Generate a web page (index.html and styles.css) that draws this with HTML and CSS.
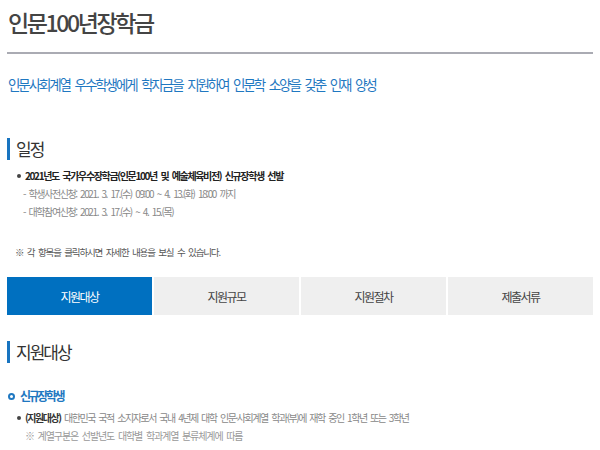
FILE: index.html
```html
<!DOCTYPE html>
<html lang="ko">
<head>
    <meta charset="UTF-8">
    <meta name="viewport" content="width=device-width, initial-scale=1.0">
    <title>인문100년장학금</title>
    <link rel="stylesheet" href="styles.css">
</head>
<body>
    <div class="page">
        <h1 class="page-title">인문100년장학금</h1>
        <p class="lead">인문사회계열 우수학생에게 학자금을 지원하여 인문학 소양을 갖춘 인재 양성</p>

        <h2 class="sec-title">일정</h2>
        <ul class="sched">
            <li class="sched-main">2021년도 국가우수장학금(인문100년 및 예술체육비전) 신규장학생 선발</li>
            <li class="sched-sub">- 학생사전신청: 2021. 3. 17.(수) 09:00 ~ 4. 13.(화) 18:00 까지</li>
            <li class="sched-sub">- 대학참여신청: 2021. 3. 17.(수) ~ 4. 15.(목)</li>
        </ul>

        <p class="notice">※ 각 항목을 클릭하시면 자세한 내용을 보실 수 있습니다.</p>

        <div class="tabs">
            <a class="tab active">지원대상</a>
            <a class="tab">지원규모</a>
            <a class="tab">지원절차</a>
            <a class="tab">제출서류</a>
        </div>

        <h2 class="sec-title">지원대상</h2>
        <h3 class="sub-title">신규장학생</h3>
        <ul class="detail">
            <li class="detail-main"><b>(지원대상)</b> 대한민국 국적 소지자로서 국내 4년제 대학 인문·사회계열 학과(부)에 재학 중인 1학년 또는 3학년</li>
            <li class="detail-note">※ 계열구분은 선발년도 대학별 학과계열 분류체계에 따름</li>
        </ul>
    </div>
</body>
</html>
```

FILE: styles.css
```css
body {
    margin: 0;
    background: #fff;
    font-family: "Noto Sans CJK KR", "Noto Sans", sans-serif;
    color: #333;
}

.page {
    padding: 0 7px;
}

ul {
    list-style: none;
    margin: 0;
    padding: 0;
}

.page-title {
    margin: 0;
    padding: 5px 0 13px 1px;
    font-size: 23px;
    font-weight: 500;
    letter-spacing: -2.4px;
    line-height: 34px;
    color: #444;
    border-bottom: 2px solid #aaabb3;
}

.lead {
    margin: 20px 0 0 1px;
    font-size: 13.5px;
    letter-spacing: -2.1px;
    word-spacing: 3px;
    line-height: 20px;
    color: #1f78c1;
}

.sec-title {
    margin: 0;
    padding-left: 6px;
    border-left: 3px solid #1874c0;
    font-size: 17px;
    font-weight: 400;
    letter-spacing: -2px;
    line-height: 22px;
    color: #333;
}

.page > .sec-title:first-of-type {
    margin-top: 44px;
}

.sched {
    margin-top: 7px;
    padding-left: 10px;
}

.sched-main {
    font-size: 10px;
    font-weight: 700;
    letter-spacing: -1.35px;
    word-spacing: 2px;
    line-height: 18px;
    color: #222;
}

.sched-main::before,
.detail-main::before {
    content: "";
    display: inline-block;
    width: 4px;
    height: 4px;
    border-radius: 50%;
    background: #444;
    margin: 0 4px 2px 0;
    vertical-align: middle;
}

.sched-sub {
    padding-left: 6px;
    font-size: 10px;
    letter-spacing: -1.4px;
    word-spacing: 2px;
    line-height: 18px;
    color: #888;
}

.notice {
    margin: 22px 0 0 8px;
    font-size: 9.5px;
    letter-spacing: -1.15px;
    word-spacing: 2px;
    line-height: 18px;
    color: #555;
}

.tabs {
    display: flex;
    gap: 2px;
    margin-top: 16px;
}

.tab {
    flex: 1;
    height: 38px;
    display: flex;
    align-items: center;
    justify-content: center;
    background: #efefef;
    font-size: 12px;
    letter-spacing: -1.5px;
    color: #444;
    cursor: pointer;
}

.tab.active {
    background: #0070c0;
    color: #fff;
}

.tabs + .sec-title {
    margin-top: 26px;
}

.sub-title {
    margin: 23px 0 0 1px;
    font-size: 12px;
    font-weight: 700;
    letter-spacing: -2.4px;
    line-height: 20px;
    color: #1f78c1;
}

.sub-title::before {
    content: "";
    display: inline-block;
    width: 3px;
    height: 3px;
    border: 2px solid #1f78c1;
    border-radius: 50%;
    margin: 0 5px 2px 0;
    vertical-align: middle;
}

.detail {
    margin-top: 3px;
    padding-left: 10px;
}

.detail-main {
    font-size: 10px;
    letter-spacing: -1.45px;
    word-spacing: 2px;
    line-height: 18px;
    color: #888;
}

.detail-main b {
    color: #333;
}

.detail-note {
    padding-left: 8px;
    font-size: 10px;
    letter-spacing: -1.1px;
    word-spacing: 2px;
    line-height: 18px;
    color: #999;
}
```
